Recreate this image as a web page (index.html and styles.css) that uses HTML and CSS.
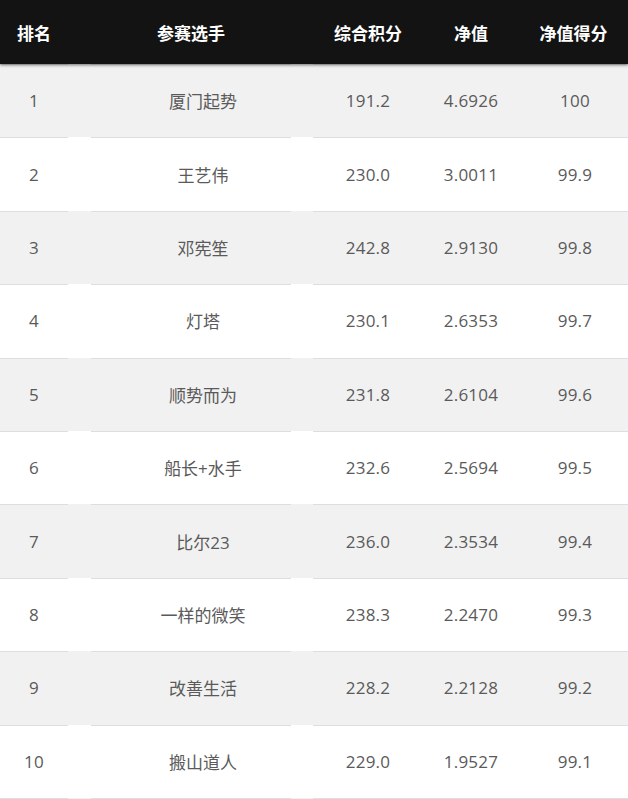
FILE: index.html
```html
<!DOCTYPE html>
<html lang="zh-CN">
<head>
<meta charset="utf-8">
<title>排名</title>
<link rel="stylesheet" href="styles.css">
</head>
<body>
<div class="board">
  <div class="head">
    <div class="h c-rank">排名</div>
    <div class="h c-gap"></div>
    <div class="h c-name">参赛选手</div>
    <div class="h c-gap"></div>
    <div class="h c-score">综合积分</div>
    <div class="h c-net">净值</div>
    <div class="h c-ns">净值得分</div>
  </div>
  <div class="row odd"><div class="d c-rank">1</div><div class="d c-gap"></div><div class="d c-name">厦门起势</div><div class="d c-gap"></div><div class="d c-score">191.2</div><div class="d c-net">4.6926</div><div class="d c-ns">100</div></div>
  <div class="row"><div class="d c-rank">2</div><div class="d c-gap"></div><div class="d c-name">王艺伟</div><div class="d c-gap"></div><div class="d c-score">230.0</div><div class="d c-net">3.0011</div><div class="d c-ns">99.9</div></div>
  <div class="row odd"><div class="d c-rank">3</div><div class="d c-gap"></div><div class="d c-name">邓宪笙</div><div class="d c-gap"></div><div class="d c-score">242.8</div><div class="d c-net">2.9130</div><div class="d c-ns">99.8</div></div>
  <div class="row"><div class="d c-rank">4</div><div class="d c-gap"></div><div class="d c-name">灯塔</div><div class="d c-gap"></div><div class="d c-score">230.1</div><div class="d c-net">2.6353</div><div class="d c-ns">99.7</div></div>
  <div class="row odd"><div class="d c-rank">5</div><div class="d c-gap"></div><div class="d c-name">顺势而为</div><div class="d c-gap"></div><div class="d c-score">231.8</div><div class="d c-net">2.6104</div><div class="d c-ns">99.6</div></div>
  <div class="row"><div class="d c-rank">6</div><div class="d c-gap"></div><div class="d c-name">船长+水手</div><div class="d c-gap"></div><div class="d c-score">232.6</div><div class="d c-net">2.5694</div><div class="d c-ns">99.5</div></div>
  <div class="row odd"><div class="d c-rank">7</div><div class="d c-gap"></div><div class="d c-name">比尔23</div><div class="d c-gap"></div><div class="d c-score">236.0</div><div class="d c-net">2.3534</div><div class="d c-ns">99.4</div></div>
  <div class="row"><div class="d c-rank">8</div><div class="d c-gap"></div><div class="d c-name">一样的微笑</div><div class="d c-gap"></div><div class="d c-score">238.3</div><div class="d c-net">2.2470</div><div class="d c-ns">99.3</div></div>
  <div class="row odd"><div class="d c-rank">9</div><div class="d c-gap"></div><div class="d c-name">改善生活</div><div class="d c-gap"></div><div class="d c-score">228.2</div><div class="d c-net">2.2128</div><div class="d c-ns">99.2</div></div>
  <div class="row"><div class="d c-rank">10</div><div class="d c-gap"></div><div class="d c-name">搬山道人</div><div class="d c-gap"></div><div class="d c-score">229.0</div><div class="d c-net">1.9527</div><div class="d c-ns">99.1</div></div>
  <div class="row odd"><div class="d c-rank"></div><div class="d c-gap"></div><div class="d c-name"></div><div class="d c-gap"></div><div class="d c-score"></div><div class="d c-net"></div><div class="d c-ns"></div></div>
</div>
</body>
</html>
```
FILE: styles.css
```css
html, body {
  margin: 0;
  padding: 0;
  background: #ffffff;
}
body {
  font-family: "Open Sans", "Noto Sans CJK SC", sans-serif;
  overflow: hidden;
}
.board {
  width: 628px;
}
.head, .row {
  display: grid;
  grid-template-columns: 68px 23px 200px 22px 110px 96px 109px;
}
.head {
  position: relative;
  z-index: 1;
  height: 64px;
  background: #131313;
  box-shadow: 0 1px 3px rgba(0, 0, 0, 0.55);
  align-items: center;
}
.h {
  color: #ffffff;
  font-family: "Noto Sans CJK SC", sans-serif;
  font-weight: 700;
  font-size: 17px;
  text-align: center;
  line-height: 1;
}
.row {
  height: 73.4px;
  box-sizing: border-box;
  background: #ffffff;
}
.row.odd {
  background: #f1f1f1;
}
.d {
  border-top: 1px solid #dedee2;
  display: flex;
  align-items: center;
  justify-content: center;
  font-size: 17px;
  color: #5a5a5a;
  padding-bottom: 1px;
}
.d.c-gap {
  border-top-color: transparent;
}
.d.c-name {
  padding-left: 24px;
}
.d.c-score, .d.c-net, .d.c-ns, .d.c-rank {
  letter-spacing: 0.2px;
}
.d.c-ns {
  padding-left: 3px;
}
```
